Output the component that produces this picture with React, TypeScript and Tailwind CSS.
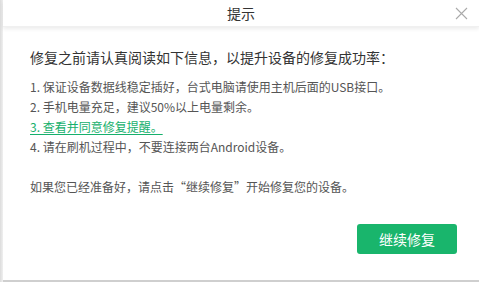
const App = () => {
  return (
    <div
      className="w-[479px] h-[282px] bg-white flex overflow-hidden"
      style={{ fontFamily: '"Noto Sans CJK SC", "Noto Sans", sans-serif' }}
    >
      <div className="w-[3px] bg-gradient-to-r from-[#dcdcdc] to-[#f0f0f0]" />
      <div className="flex-1 flex flex-col">
        <div className="h-[27px] relative flex items-center justify-center bg-white shadow-[0_2px_4px_rgba(0,0,0,0.08)] border-b border-[#f0f0f0]">
          <span className="text-[14px] text-[#333]">提示</span>
          <svg className="absolute right-[11px] top-[7px]" width="13" height="13" viewBox="0 0 13 13">
            <path d="M1 1 L12 12 M12 1 L1 12" stroke="#aaa" strokeWidth="1.1" fill="none" />
          </svg>
        </div>
        <div className="flex-1 flex flex-col pl-[27px] pr-[20px]">
          <p className="mt-[19px] text-[14px] leading-[22px] text-[#333]">
            修复之前请认真阅读如下信息，以提升设备的修复成功率：
          </p>
          <ul className="mt-[9px] text-[12px] leading-[20px] text-[#555]">
            <li>1. 保证设备数据线稳定插好，台式电脑请使用主机后面的USB接口。</li>
            <li>2. 手机电量充足，建议50%以上电量剩余。</li>
            <li>
              <a className="text-[#16b06c] underline underline-offset-2">3. 查看并同意修复提醒。</a>
            </li>
            <li>4. 请在刷机过程中，不要连接两台Android设备。</li>
          </ul>
          <p className="mt-[20px] text-[12px] leading-[20px] text-[#555]">
            如果您已经准备好，请点击“继续修复”开始修复您的设备。
          </p>
          <div className="flex justify-end mt-[27px]">
            <button className="w-[100px] h-[30px] mr-[2px] rounded-[3px] bg-[#19b56c] text-white text-[14px]">
              继续修复
            </button>
          </div>
        </div>
        <div className="h-[2px] bg-[#cfcfcf]" />
      </div>
    </div>
  );
};

export default App;
